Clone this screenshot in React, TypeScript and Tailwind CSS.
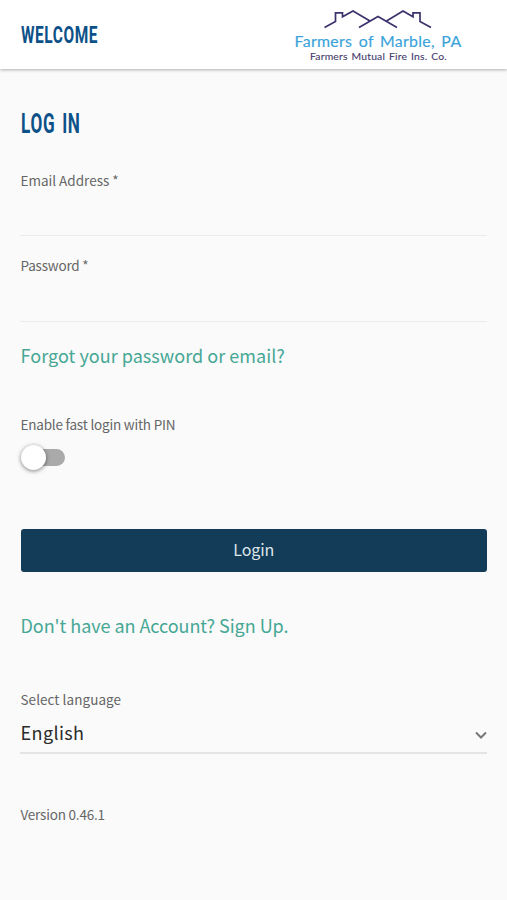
import { useState } from 'react';

function Logo() {
  return (
    <svg width="174" height="60" viewBox="290 5 174 60" fill="none">
      <g stroke="#3a336c" strokeWidth="1.7">
        <path d="M324.5 27.5L335.5 21.5V12.8H342.5V16.8L353 11L370 21" />
        <path d="M359 27.5L378 16.5L397 27.5" />
        <path d="M386.5 21L403 11L413 16.8V12.8H420V21.5L431 27.5" />
      </g>
      <text
        x="294.5"
        y="47"
        textLength="167"
        lengthAdjust="spacingAndGlyphs"
        strokeWidth="0.15"
        className="fill-[#3ba3da] stroke-[#3ba3da] font-['Lato',sans-serif] text-[15.5px] tracking-[0.3px] [word-spacing:2px]"
      >
        Farmers of Marble, PA
      </text>
      <text
        x="310"
        y="60"
        textLength="137"
        lengthAdjust="spacingAndGlyphs"
        strokeWidth="0.1"
        className="fill-[#3f3969] stroke-[#3f3969] font-['Lato',sans-serif] text-[10px] tracking-[0.2px] [word-spacing:1px]"
      >
        Farmers Mutual Fire Ins. Co.
      </text>
    </svg>
  );
}

interface FieldProps {
  id: string;
  type: string;
  label: string;
  labelClass: string;
}

function Field({ id, type, label, labelClass }: FieldProps) {
  return (
    <div className="flex h-[66px] flex-col border-b border-[#ececec]">
      <label
        htmlFor={id}
        className={`self-start pl-[0.5px] text-[13.5px] leading-5 text-[#666] ${labelClass}`}
      >
        {label}
      </label>
      <input id={id} type={type} className="w-full flex-1 bg-transparent text-lg outline-none" />
    </div>
  );
}

export default function App() {
  const [pinEnabled, setPinEnabled] = useState(false);

  return (
    <div className="flex min-h-[900px] flex-col bg-[#fafafa] font-['Noto_Sans_CJK_SC',sans-serif]">
      {/* Header */}
      <header className="flex h-[69px] items-start justify-between bg-white pt-[5px] pr-[43px] pl-[21px] shadow-[0_1px_3px_rgba(0,0,0,0.3)]">
        <span className="mt-[15px] inline-block origin-left scale-x-[0.63] font-['Roboto',sans-serif] text-[24.5px] leading-[30px] font-bold tracking-[0.9px] text-[#0d5189]">
          WELCOME
        </span>
        <Logo />
      </header>

      <main className="flex flex-col px-5 pt-[38px]">
        <h1 className="ml-px origin-left scale-x-[0.61] self-start font-['Roboto',sans-serif] text-[28px] leading-[34px] font-bold tracking-[1.2px] text-[#0d5189] [word-spacing:3px]">
          LOG IN
        </h1>

        <form className="mt-[29px] flex flex-col" onSubmit={(e) => e.preventDefault()}>
          <Field id="email" type="email" label="Email Address *" labelClass="tracking-normal" />
          <div className="h-5" />
          <Field id="password" type="password" label="Password *" labelClass="-mt-px mb-px tracking-[-0.2px]" />

          <a href="#" className="mt-[18px] self-start pl-[0.5px] text-[18px] leading-[30px] tracking-[0.04px] text-[#46a795]">
            Forgot your password or email?
          </a>

          {/* PIN switch */}
          <span className="mt-[44px] self-start pl-[0.5px] text-[13.5px] leading-5 tracking-[-0.2px] text-[#666]">
            Enable fast login with PIN
          </span>
          <button
            type="button"
            role="switch"
            aria-checked={pinEnabled}
            onClick={() => setPinEnabled(!pinEnabled)}
            className="mt-[10px] ml-[0.5px] flex h-[26px] w-11 items-center"
          >
            <span
              className={`z-10 size-[25px] shrink-0 rounded-full bg-white shadow-[0_1px_4px_rgba(0,0,0,0.5)] ${
                pinEnabled ? 'translate-x-5' : ''
              }`}
            />
            <span className="-ml-[19px] h-[17px] w-[38px] shrink-0 rounded-full bg-[#aaa]" />
          </button>

          <button
            type="submit"
            className="mt-[58.5px] ml-[0.5px] h-[43px] rounded-[3px] bg-[#133c59] pb-[3px] text-[16px] tracking-[-0.1px] text-[#dfe6ea]"
          >
            Login
          </button>
        </form>

        <a href="#" className="mt-[38.5px] self-start pl-[0.5px] text-[18px] leading-[30px] tracking-[-0.05px] text-[#46a795]">
          Don't have an Account? Sign Up.
        </a>

        {/* Language */}
        <div className="mt-[49px] flex flex-col border-b-2 border-[#e4e4e4]">
          <span className="self-start pl-[0.5px] text-[13.5px] leading-5 tracking-[0.06px] text-[#666]">
            Select language
          </span>
          <div className="flex h-[43px] items-center justify-between pt-[4px]">
            <span className="pl-[0.5px] text-[18px] tracking-[0.4px] text-[#2b2b2b]">English</span>
            <svg
              className="mt-[4px] -mr-px"
              width="14"
              height="10"
              viewBox="0 0 14 10"
              fill="none"
              stroke="#777"
              strokeWidth="2"
            >
              <path d="M2 2.5L7 7.5L12 2.5" />
            </svg>
          </div>
        </div>

        <span className="mt-[50px] self-start pl-[0.5px] text-[13.5px] leading-5 tracking-[-0.2px] text-[#666]">
          Version 0.46.1
        </span>
      </main>
    </div>
  );
}
